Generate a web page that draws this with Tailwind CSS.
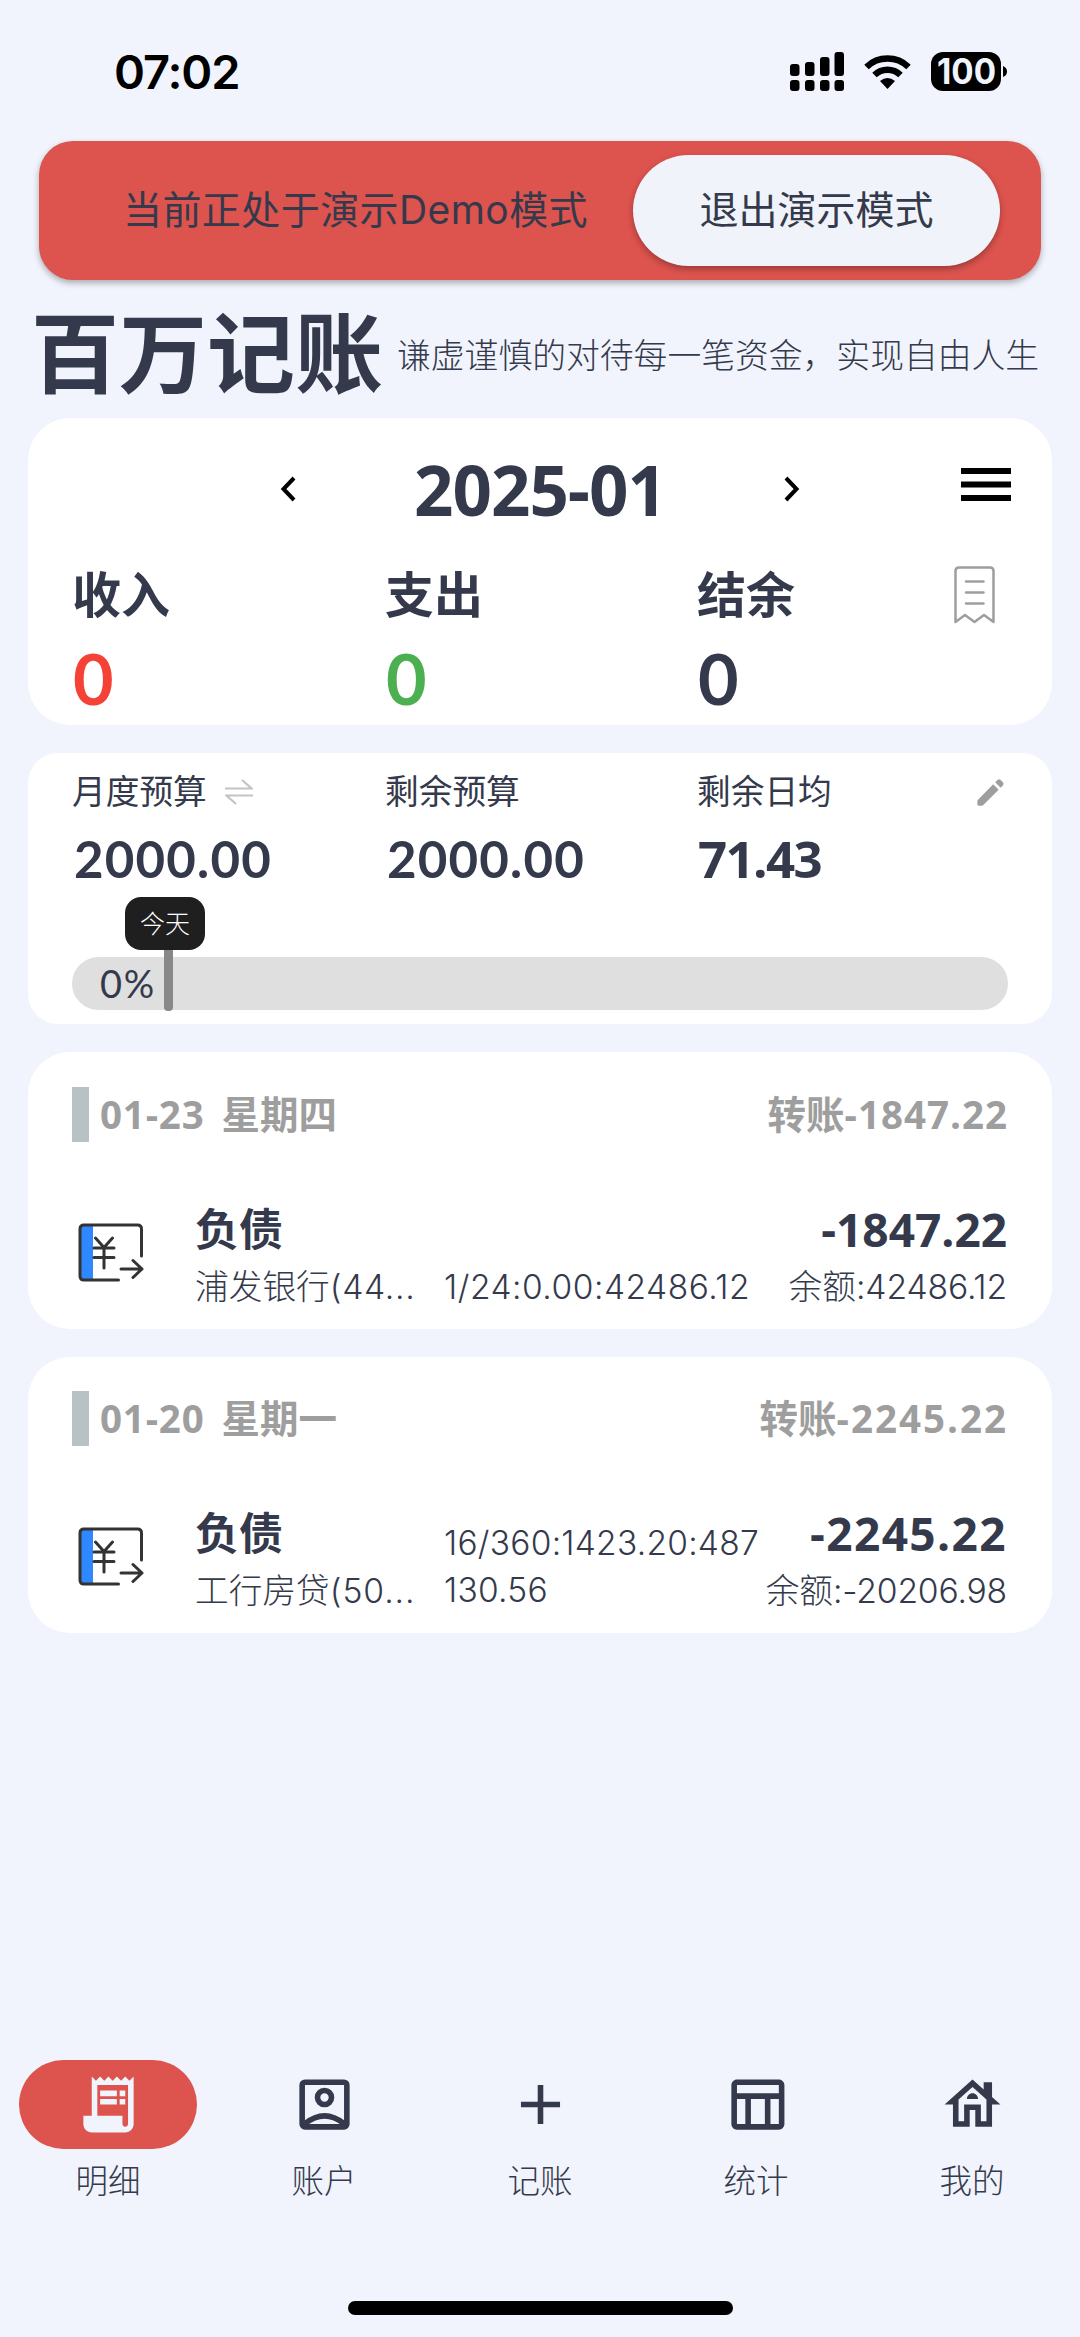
<!DOCTYPE html>
<html lang="zh-CN">
<head>
<meta charset="utf-8">
<title>百万记账</title>
<script src="https://cdn.jsdelivr.net/npm/@tailwindcss/browser@4"></script>
</head>
<body class="bg-[#f1f4fc]">
<div class="flex h-[2337px] w-[1080px] flex-col overflow-hidden bg-[#f1f4fc] font-['Inter','Noto_Sans_CJK_SC',sans-serif] text-[#343a4c] whitespace-nowrap">

  <!-- Status bar -->
  <header class="flex h-[141px] shrink-0 items-start pt-[52px] pl-[114px] pr-[72px] text-black">
    <span class="mt-[-4px] text-[47px] leading-[48px] font-semibold tracking-[-1.1px]">07:02</span>
    <svg class="ml-auto shrink-0" width="218" height="40" viewBox="790 52 218 40">
      <g fill="#000">
        <rect x="790" y="64" width="9.5" height="12" rx="3"/><rect x="805" y="62" width="9.5" height="14" rx="3"/><rect x="820" y="57" width="9.5" height="19" rx="3"/><rect x="834.5" y="52" width="9.5" height="24" rx="3"/>
        <rect x="790" y="80" width="9.5" height="11" rx="3"/><rect x="805" y="80" width="9.5" height="11" rx="3"/><rect x="820" y="80" width="9.5" height="11" rx="3"/><rect x="834.5" y="80" width="9.5" height="11" rx="3"/>
        <path d="M887.500 89 L880 81 Q887.500 75 895 81 Z"/>
        <rect x="931" y="52" width="70" height="39" rx="12"/>
        <path d="M1003 66 Q1007 67.500 1007 71.500 Q1007 75.500 1003 77 Z"/>
      </g>
      <g fill="none" stroke="#000" stroke-width="6.500">
        <path d="M866.500 67 A30.500 30.500 0 0 1 908.500 67"/>
        <path d="M874.500 75 A19 19 0 0 1 900.500 75"/>
      </g>
      <text x="966.500" y="84" text-anchor="middle" textLength="59" lengthAdjust="spacingAndGlyphs" font-size="35" font-weight="700" fill="#f1f4fc">100</text>
    </svg>
  </header>

  <!-- Demo banner -->
  <section class="mx-[39px] flex h-[139px] shrink-0 items-center rounded-[34px] bg-[#dd534e] pl-[84px] pr-[41px] text-[39px] shadow-[0_3px_6px_rgba(0,0,0,0.3)]">
    <span class="tracking-[0.43px]">当前正处于演示Demo模式</span>
    <button class="ml-auto flex h-[111px] w-[367px] shrink-0 items-center justify-center rounded-full bg-[#f0f3f9] shadow-[0_3px_6px_rgba(0,0,0,0.3)]">退出演示模式</button>
  </section>

  <!-- Title -->
  <section class="flex h-[138px] shrink-0 items-center pt-[10px] pl-[31px]">
    <h1 class="text-[88px] leading-[100px] font-bold">百万记账</h1>
    <p class="ml-[14px] mt-[4px] text-[33.800px] font-light">谦虚谨慎的对待每一笔资金，实现自由人生</p>
  </section>

  <main class="mx-[28px] flex flex-col gap-[28px]">
    <!-- Monthly summary -->
    <section class="h-[307px] rounded-[42px] bg-white pl-[44px] pr-[41px]">
      <div class="flex h-[142px] items-center">
        <svg class="ml-[208px] shrink-0" width="16" height="26" viewBox="0 0 16 26" fill="none" stroke="#000" stroke-width="4"><path d="M14 2 3.500 13 14 24"/></svg>
        <span class="flex w-[488px] justify-center font-['Open_Sans'] text-[69px] leading-[80px] font-bold tracking-[-1px]">2025-01</span>
        <svg class="shrink-0" width="16" height="26" viewBox="0 0 16 26" fill="none" stroke="#000" stroke-width="4"><path d="M2 2 12.500 13 2 24"/></svg>
        <svg class="ml-auto mt-[-9px] shrink-0" width="50" height="33" viewBox="0 0 50 33"><path d="M0 0h50v6H0zM0 13.500h50v6H0zM0 27h50v6H0z"/></svg>
      </div>
      <div class="grid grid-cols-[313px_312px_1fr] font-bold">
        <div><div class="h-[72px] text-[49px] leading-[72px]">收入</div><div class="pl-px font-['Lato'] text-[70px] leading-[92px] text-[#f44336]">0</div></div>
        <div><div class="h-[72px] text-[49px] leading-[72px]">支出</div><div class="pl-px font-['Lato'] text-[70px] leading-[92px] text-[#4caf50]">0</div></div>
        <div class="flex justify-between"><div><div class="h-[72px] text-[49px] leading-[72px]">结余</div><div class="pl-px font-['Lato'] text-[70px] leading-[92px]">0</div></div>
          <svg class="mt-[6px] mr-[16px] shrink-0" width="41" height="58" viewBox="0 0 41 58" fill="none" stroke="#9e9e9e" stroke-width="2.500" stroke-linecap="round" stroke-linejoin="round"><path d="M1.500 56V5Q1.500 1.500 5 1.500H36Q39.500 1.500 39.500 5V56L30 49 20.500 56 11 49Z"/><path d="M12 15.500H29.500M12 26.500H29.500M12 37.500H29.500"/></svg>
        </div>
      </div>
    </section>

    <!-- Budget -->
    <section class="relative h-[271px] rounded-[30px] bg-white px-[44px] pt-[12px]">
      <div class="grid grid-cols-[313px_312px_1fr]">
        <div><div class="flex h-[54px] items-center text-[33.700px]">月度预算
          <svg class="ml-[18px] shrink-0" width="28" height="26" viewBox="0 0 28 26" fill="none" stroke="#c4c4c4" stroke-width="2.200"><path d="M0 9.500H26.500L17 1M28 16.500H1.500L11 25"/></svg></div>
          <div class="pl-[2px] font-['Lato'] text-[51px] leading-[80px] font-bold tracking-[1.2px]">2000.00</div></div>
        <div><div class="flex h-[54px] items-center text-[33.700px]">剩余预算</div><div class="pl-[2px] font-['Lato'] text-[51px] leading-[80px] font-bold tracking-[1.2px]">2000.00</div></div>
        <div><div class="flex h-[54px] items-center justify-between text-[33.700px]">剩余日均
          <svg class="shrink-0" width="35" height="35" viewBox="0 0 24 24" fill="#9e9e9e"><path d="M3 17.800v2.200c0 .6.4 1 1 1h2.200c.3 0 .5-.1.7-.3L17.600 10.100l-3.750-3.750L3.300 17.100c-.2.2-.3.4-.3.7zM20.500 7.200a1.600 1.600 0 0 0 0-2.200l-1.500-1.500a1.600 1.600 0 0 0-2.200 0l-1.600 1.500 3.750 3.750z"/></svg></div>
          <div class="pl-px font-['Open_Sans'] text-[51px] leading-[78px] font-bold tracking-[-1.6px]">71.43</div></div>
      </div>
      <div class="mt-[58px] flex h-[53px] items-center rounded-full bg-[#dfdfdf] pl-[28px] font-['Lato'] text-[38px] tracking-[1.7px]">0%</div>
      <div class="absolute top-[190px] left-[136px] h-[68px] w-[9px] rounded-b-[4px] bg-[#888]"></div>
      <div class="absolute top-[144px] left-[97px] flex h-[53px] w-[80px] items-center justify-center rounded-[16px] bg-[#1f1f1f] pt-[2px] text-[25px] font-light text-white">今天</div>
    </section>

    <!-- 01-23 -->
    <section class="h-[277px] rounded-[42px] bg-white px-[44px] pt-[35px]">
      <div class="flex h-[55px] items-baseline text-[38.500px] leading-[55px] font-bold text-[#9e9e9e]">
        <i class="h-[55px] w-[17px] shrink-0 self-start bg-[#b8c2c4]"></i>
        <span class="ml-[11px] font-['Open_Sans'] tracking-[0.8px]">01-23</span><span class="ml-[17px]">星期四</span>
        <span class="ml-auto flex items-baseline">转账<span class="font-['Open_Sans'] tracking-[1px]">-1847.22</span></span>
      </div>
      <div class="mt-[60px] flex h-[108px]">
        <svg class="mt-[21px] ml-[6px] shrink-0" width="66" height="60" viewBox="0 0 66 60" fill="none" stroke="#333" stroke-width="3" stroke-linecap="round" stroke-linejoin="round"><path d="M2 2h13v55H2z" fill="#2f88ff" stroke="none"/><path d="M63.500 33V6Q63.500 2 59.500 2H6Q2 2 2 6V53Q2 57 6 57H40.500M17.500 15 26 24.500 34.500 15M16 25H36M16 34.500H36M26 25V45M43 46H64M55 37.500 64 46 55 54.500"/></svg>
        <div class="ml-[51px] w-[249px] shrink-0"><div class="text-[44px] leading-[56px] font-bold">负债</div><div class="text-[33.700px] leading-[58px] font-light">浦发银行<span class="tracking-[0.7px]">(44...</span></div></div>
        <div class="w-0 flex-1 pt-[56px] text-[33.500px] leading-[58px] font-light tracking-[0.52px]">1/24:0.00:42486.12</div>
        <div class="mr-px flex flex-col items-end"><div class="font-['Open_Sans'] text-[46px] leading-[54px] font-bold">-1847.22</div><div class="pt-[2px] text-[33.700px] leading-[58px] font-light">余额<span class="tracking-[-0.14px]">:42486.12</span></div></div>
      </div>
    </section>

    <!-- 01-20 -->
    <section class="h-[276px] rounded-[42px] bg-white px-[44px] pt-[34px]">
      <div class="flex h-[55px] items-baseline text-[38.500px] leading-[55px] font-bold text-[#9e9e9e]">
        <i class="h-[55px] w-[17px] shrink-0 self-start bg-[#b8c2c4]"></i>
        <span class="ml-[11px] font-['Open_Sans'] tracking-[0.8px]">01-20</span><span class="ml-[17px]">星期一</span>
        <span class="ml-auto flex items-baseline">转账<span class="font-['Open_Sans'] tracking-[2px]">-2245.22</span></span>
      </div>
      <div class="mt-[60px] flex h-[108px]">
        <svg class="mt-[21px] ml-[6px] shrink-0" width="66" height="60" viewBox="0 0 66 60" fill="none" stroke="#333" stroke-width="3" stroke-linecap="round" stroke-linejoin="round"><path d="M2 2h13v55H2z" fill="#2f88ff" stroke="none"/><path d="M63.500 33V6Q63.500 2 59.500 2H6Q2 2 2 6V53Q2 57 6 57H40.500M17.500 15 26 24.500 34.500 15M16 25H36M16 34.500H36M26 25V45M43 46H64M55 37.500 64 46 55 54.500"/></svg>
        <div class="ml-[51px] w-[249px] shrink-0"><div class="text-[44px] leading-[56px] font-bold">负债</div><div class="text-[33.700px] leading-[58px] font-light">工行房贷<span class="tracking-[0.9px]">(50...</span></div></div>
        <div class="w-0 flex-1 pt-[14px] text-[33.500px] leading-[47px] font-light tracking-[0.25px]">16/360:1423.20:487<br>130.56</div>
        <div class="mr-px flex flex-col items-end"><div class="font-['Open_Sans'] text-[46px] leading-[54px] font-bold tracking-[1.4px]">-2245.22</div><div class="pt-[2px] text-[33.700px] leading-[58px] font-light">余额<span class="tracking-[-0.19px]">:-20206.98</span></div></div>
      </div>
    </section>
  </main>

  <!-- Tab bar -->
  <nav class="mt-auto grid h-[241px] shrink-0 grid-cols-5 justify-items-center text-[32.500px] font-light">
    <div class="flex flex-col items-center"><span class="flex h-[89px] w-[178px] items-center justify-center rounded-full bg-[#dd534e]"><svg width="67" height="67" viewBox="0 0 24 24" fill="#f1f4fc"><path fill-rule="evenodd" d="M19.500 3.500 18 2l-1.500 1.500L15 2l-1.500 1.500L12 2l-1.500 1.500L9 2 7.500 3.500 6 2v14H3v3c0 1.660 1.340 3 3 3h12c1.660 0 3-1.340 3-3V2l-1.500 1.500zM19 19c0 .55-.45 1-1 1s-1-.45-1-1v-3H8V5h11v14zM9 7h6v2H9zM16 7h2v2h-2zM9 10h6v2H9zM16 10h2v2h-2z"/></svg></span><span class="leading-[66px]">明细</span></div>
    <div class="flex flex-col items-center"><span class="flex h-[89px] items-center"><svg width="67" height="67" viewBox="0 0 24 24" fill="none" stroke="#343a4c" stroke-width="2"><rect x="4" y="4" width="16" height="16" rx="1"/><circle cx="12" cy="9.500" r="2.500"/><path d="M5 18.900Q12 13.300 19 18.900"/></svg></span><span class="leading-[66px]">账户</span></div>
    <div class="flex flex-col items-center"><span class="flex h-[89px] items-center"><svg width="67" height="67" viewBox="0 0 24 24" fill="#343a4c"><path d="M19 13h-6v6h-2v-6H5v-2h6V5h2v6h6v2z"/></svg></span><span class="leading-[66px]">记账</span></div>
    <div class="flex flex-col items-center"><span class="flex h-[89px] items-center"><svg width="67" height="67" viewBox="0 0 24 24" fill="#343a4c"><path d="M20 3H5c-1.100 0-2 .9-2 2v14c0 1.100.9 2 2 2h15c1.100 0 2-.9 2-2V5c0-1.100-.9-2-2-2zm0 2v3H5V5h15zm-5 14h-5v-9h5v9zM5 10h3v9H5v-9zm12 9v-9h3v9h-3z"/></svg></span><span class="leading-[66px]">统计</span></div>
    <div class="flex flex-col items-center"><span class="flex h-[89px] items-center"><svg width="67" height="67" viewBox="0 0 24 24" fill="#343a4c"><path d="M19 9.300V4h-3v2.600L12 3 2 12h3v8h6v-6h2v6h6v-8h3l-3-2.700zM17 18h-2v-6H9v6H7v-7.810l5-4.500 5 4.500V18zM10 10h4c0-1.100-.9-2-2-2s-2 .9-2 2z"/></svg></span><span class="leading-[66px]">我的</span></div>
  </nav>
  <div class="mx-auto h-[14px] w-[385px] shrink-0 rounded-full bg-black"></div>
  <div class="h-[22px] shrink-0"></div>
</div>
</body>
</html>
